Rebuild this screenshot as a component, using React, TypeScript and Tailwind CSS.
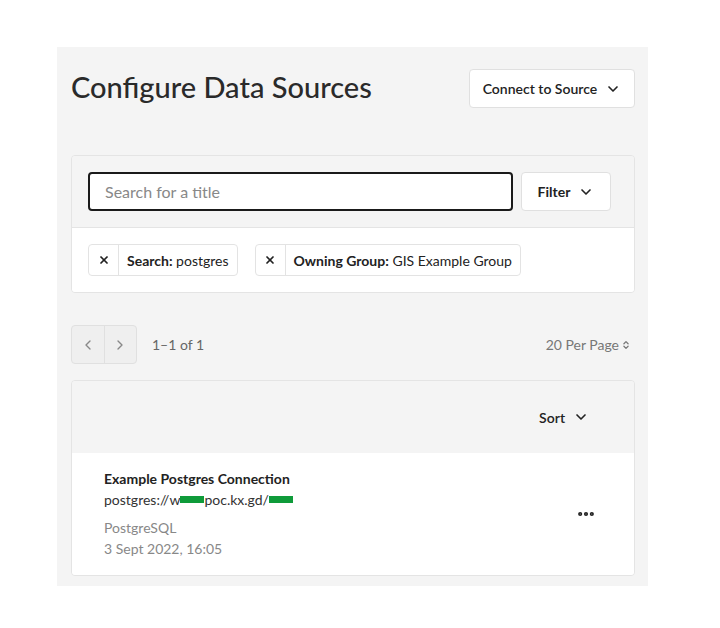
import { ChevronDown, ChevronLeft, ChevronRight, X, MoreHorizontal, ChevronsUpDown } from "lucide-react";

const font = { fontFamily: "Lato, 'Open Sans', sans-serif" };

function Chip({ label, value }: { label: string; value: string }) {
  return (
    <div className="flex h-8 items-center rounded border border-[#e3e3e3] bg-white text-[14px] text-[#222]">
      <span className="flex h-full w-[30px] items-center justify-center border-r border-[#e3e3e3]">
        <X className="h-3 w-3" strokeWidth={3.5} />
      </span>
      <span className="px-2">
        <span className="font-bold">{label}:</span> {value}
      </span>
    </div>
  );
}

export default function App() {
  return (
    <div className="h-[628px] w-[720px] bg-white pt-[47px] pl-[57px]" style={font}>
      <div className="h-[539px] w-[591px] bg-[#f4f4f4] pr-[13px] pl-[14px]">
        <div className="flex items-center justify-between pt-[22px]">
          <h1 className="pb-[5px] text-[29px] leading-none font-medium text-[#2a2a2a]">Configure Data Sources</h1>
          <button className="flex h-[39px] w-[166px] items-center justify-center gap-2 rounded border border-[#e0e0e0] bg-white text-[14px] font-semibold text-[#222]">
            Connect to Source
            <ChevronDown className="h-4 w-4" strokeWidth={2.5} />
          </button>
        </div>

        <div className="mt-[47px] overflow-hidden rounded border border-[#e4e4e4]">
          <div className="flex items-center gap-2 bg-[#f4f4f4] px-4 py-4">
            <div className="flex h-[39px] w-[425px] items-center rounded border-2 border-[#1a1a1a] bg-white px-[15px] text-[16px] text-[#888]">
              Search for a title
            </div>
            <button className="flex h-[39px] w-[90px] items-center justify-center gap-2 rounded border border-[#e0e0e0] bg-white text-[14px] font-bold text-[#222]">
              Filter
              <ChevronDown className="h-4 w-4" strokeWidth={2.5} />
            </button>
          </div>
          <div className="flex gap-[17px] border-t border-[#e4e4e4] bg-white px-4 pt-4 pb-[16px]">
            <Chip label="Search" value="postgres" />
            <Chip label="Owning Group" value="GIS Example Group" />
          </div>
        </div>

        <div className="mt-[32px] flex items-center">
          <div className="flex h-[39px] w-[66px] overflow-hidden rounded border border-[#e0e0e0] bg-[#efefef] text-[#888]">
            <span className="flex flex-1 items-center justify-center border-r border-[#e0e0e0]">
              <ChevronLeft className="h-4 w-4" />
            </span>
            <span className="flex flex-1 items-center justify-center">
              <ChevronRight className="h-4 w-4" />
            </span>
          </div>
          <span className="ml-[15px] text-[14px] text-[#666]">1–1 of 1</span>
          <span className="ml-auto flex items-center pr-1 text-[14px] text-[#777]">
            20 Per Page
            <ChevronsUpDown className="ml-[2px] h-[10px] w-[10px]" strokeWidth={3} />
          </span>
        </div>

        <div className="mt-4 overflow-hidden rounded border border-[#e4e4e4]">
          <div className="flex h-[72px] items-center justify-end bg-[#f4f4f4] pr-[45px]">
            <span className="flex items-center gap-2 text-[14px] font-semibold text-[#222]">
              Sort
              <ChevronDown className="h-4 w-4" strokeWidth={2.5} />
            </span>
          </div>
          <div className="flex items-center bg-white pt-[15px] pb-[16px] pl-8 pr-[38px]">
            <div className="flex flex-col text-[14px]">
              <span className="leading-[21px] font-bold text-[#222]">Example Postgres Connection</span>
              <span className="flex items-center leading-[21px] text-[#333]">
                postgres://w
                <span className="inline-block h-[7px] w-[24px] bg-[#0f9b3a]" />
                poc.kx.gd/
                <span className="inline-block h-[7px] w-[24px] bg-[#0f9b3a]" />
              </span>
              <span className="mt-[7px] leading-[21px] text-[#888]">PostgreSQL</span>
              <span className="leading-[21px] text-[#888]">3 Sept 2022, 16:05</span>
            </div>
            <MoreHorizontal className="ml-auto h-5 w-5 text-[#222]" strokeWidth={3} />
          </div>
        </div>
      </div>
    </div>
  );
}
